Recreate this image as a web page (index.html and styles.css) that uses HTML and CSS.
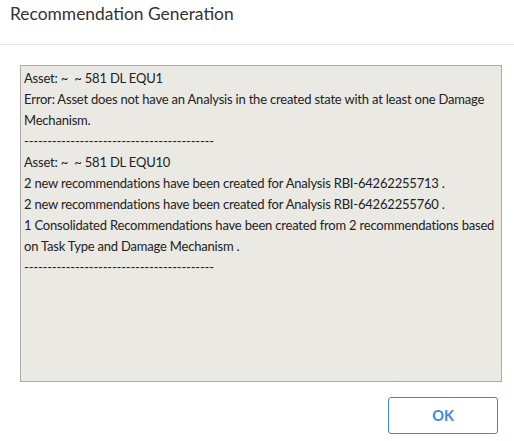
FILE: index.html
```html
<!DOCTYPE html>
<html>
<head>
<meta charset="utf-8">
<link rel="stylesheet" href="styles.css">
</head>
<body>
<div class="dialog">
  <div class="header">Recommendation Generation</div>
  <div class="content">
    <div class="log">
      <div class="line">Asset: ~ &nbsp;~ 581 DL EQU1</div>
      <div class="line">Error: Asset does not have an Analysis in the created state with at least one Damage Mechanism.</div>
      <div class="line">-----------------------------------------</div>
      <div class="line">Asset: ~ &nbsp;~ 581 DL EQU10</div>
      <div class="line">2 new recommendations have been created for Analysis RBI-64262255713 .</div>
      <div class="line">2 new recommendations have been created for Analysis RBI-64262255760 .</div>
      <div class="line">1 Consolidated Recommendations have been created from 2 recommendations based on Task Type and Damage Mechanism .</div>
      <div class="line">-----------------------------------------</div>
    </div>
  </div>
  <div class="footer">
    <button class="ok">OK</button>
  </div>
</div>
</body>
</html>
```
FILE: styles.css
```css
html, body {
  margin: 0;
  padding: 0;
  background: #ffffff;
}
.dialog {
  width: 514px;
  height: 441px;
  display: flex;
  flex-direction: column;
  font-family: Lato, "Noto Sans", sans-serif;
  color: #333333;
}
.header {
  height: 45px;
  box-sizing: border-box;
  border-bottom: 1px solid #e6e6e6;
  padding: 2px 0 0 10px;
  font-size: 17.4px;
  line-height: 24px;
  color: #333333;
}
.content {
  padding: 20px 12px 0 20px;
}
.log {
  height: 317px;
  box-sizing: border-box;
  border: 1px solid #a9a9a9;
  background: #ebe9e3;
  padding: 2px 0 0 3px;
  font-size: 13px;
  letter-spacing: -0.2px;
  line-height: 21px;
  color: #222222;
}
.footer {
  display: flex;
  justify-content: flex-end;
  padding: 15px 16px 0 0;
}
.ok {
  width: 110px;
  height: 37px;
  box-sizing: border-box;
  border: 1px solid #3b87e8;
  border-radius: 3px;
  background: #ffffff;
  color: #3f86e0;
  font-family: Lato, "Noto Sans", sans-serif;
  font-weight: bold;
  font-size: 14.5px;
  padding: 0;
}
```
